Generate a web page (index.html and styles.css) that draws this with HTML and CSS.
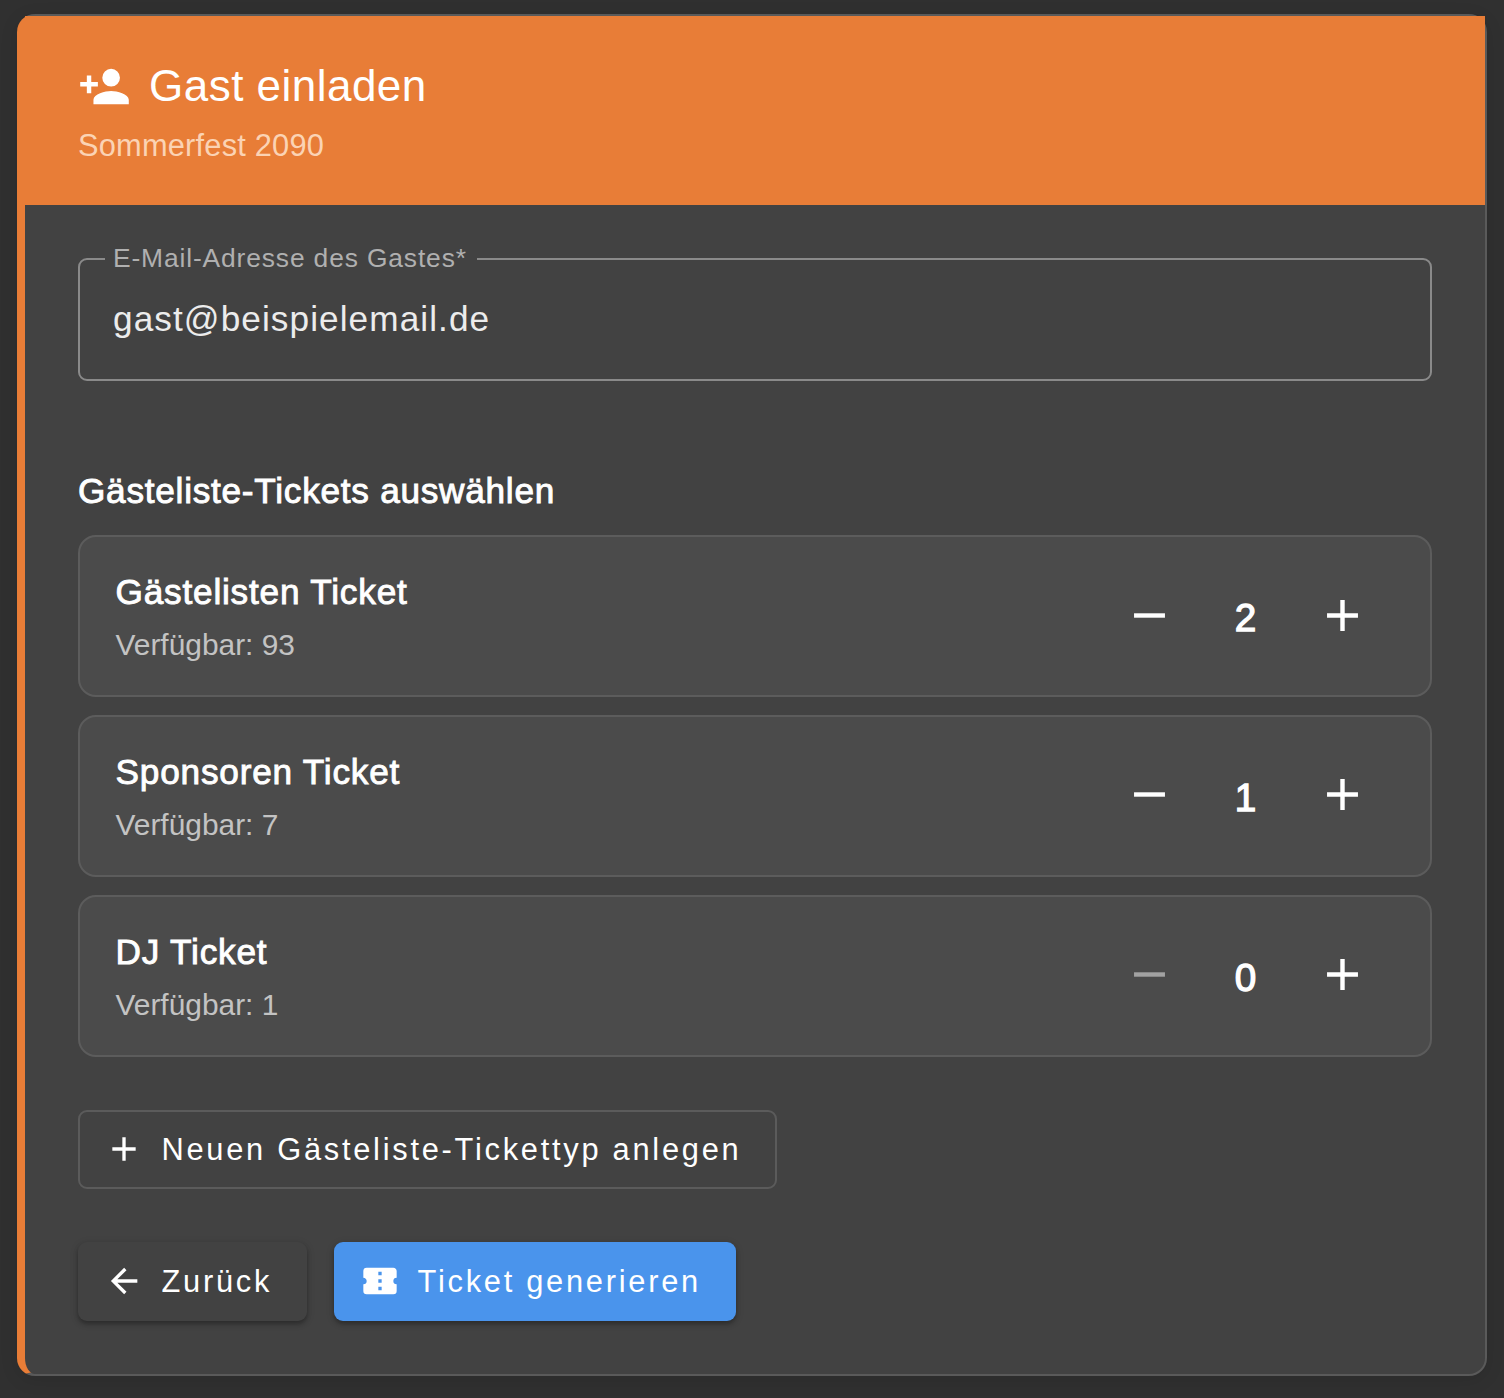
FILE: index.html
```html
<!DOCTYPE html>
<html lang="de">
<head>
<meta charset="utf-8">
<title>Gast einladen</title>
<link rel="stylesheet" href="styles.css">
</head>
<body>
<main class="card">
  <header class="card-header">
    <h1 class="card-title">
      <svg class="icon-lg" viewBox="0 0 24 24"><path d="M15,14C12.33,14 7,15.33 7,18V20H23V18C23,15.33 17.67,14 15,14M6,10V7H4V10H1V12H4V15H6V12H9V10M15,12A4,4 0 0,0 19,8A4,4 0 0,0 15,4A4,4 0 0,0 11,8A4,4 0 0,0 15,12Z"/></svg>
      <span>Gast einladen</span>
    </h1>
    <p class="card-subtitle">Sommerfest 2090</p>
  </header>
  <div class="card-body">
    <div class="field">
      <span class="field-label">E-Mail-Adresse des Gastes*</span>
      <span class="field-value">gast@beispielemail.de</span>
    </div>
    <h2 class="section-title">Gästeliste-Tickets auswählen</h2>
    <div class="tickets">
      <div class="ticket">
        <div class="ticket-info"><div class="ticket-name">Gästelisten Ticket</div><div class="ticket-stock">Verfügbar: 93</div></div>
        <div class="stepper">
          <svg class="step" viewBox="0 0 24 24"><path d="M19,13H5V11H19V13Z"/></svg>
          <span class="count">2</span>
          <svg class="step" viewBox="0 0 24 24"><path d="M19,13H13V19H11V13H5V11H11V5H13V11H19V13Z"/></svg>
        </div>
      </div>
      <div class="ticket">
        <div class="ticket-info"><div class="ticket-name">Sponsoren Ticket</div><div class="ticket-stock">Verfügbar: 7</div></div>
        <div class="stepper">
          <svg class="step" viewBox="0 0 24 24"><path d="M19,13H5V11H19V13Z"/></svg>
          <span class="count">1</span>
          <svg class="step" viewBox="0 0 24 24"><path d="M19,13H13V19H11V13H5V11H11V5H13V11H19V13Z"/></svg>
        </div>
      </div>
      <div class="ticket">
        <div class="ticket-info"><div class="ticket-name">DJ Ticket</div><div class="ticket-stock">Verfügbar: 1</div></div>
        <div class="stepper">
          <svg class="step step-disabled" viewBox="0 0 24 24"><path d="M19,13H5V11H19V13Z"/></svg>
          <span class="count">0</span>
          <svg class="step" viewBox="0 0 24 24"><path d="M19,13H13V19H11V13H5V11H11V5H13V11H19V13Z"/></svg>
        </div>
      </div>
    </div>
    <button class="btn btn-outlined"><svg class="icon" viewBox="0 0 24 24"><path d="M19,13H13V19H11V13H5V11H11V5H13V11H19V13Z"/></svg><span>Neuen Gästeliste-Tickettyp anlegen</span></button>
    <div class="actions">
      <button class="btn btn-back"><svg class="icon" viewBox="0 0 24 24"><path d="M20,11V13H8L13.5,18.5L12.08,19.92L4.16,12L12.08,4.08L13.5,5.5L8,11H20Z"/></svg><span>Zurück</span></button>
      <button class="btn btn-primary"><svg class="icon" viewBox="0 0 24 24"><path d="M13,8.5H11V6.5H13V8.5M13,13H11V11H13V13M13,17.5H11V15.5H13V17.5M22,10V6C22,4.89 21.1,4 20,4H4A2,2 0 0,0 2,6V10C3.11,10 4,10.9 4,12A2,2 0 0,1 2,14V18A2,2 0 0,0 4,20H20A2,2 0 0,0 22,18V14A2,2 0 0,1 20,12A2,2 0 0,1 22,10Z"/></svg><span>Ticket generieren</span></button>
    </div>
  </div>
</main>
</body>
</html>
```
FILE: styles.css
```css
* { box-sizing: border-box; }
body {
  margin: 0;
  padding: 14px 17px 22px;
  background: #303030;
  color: #fff;
  font-family: "Liberation Sans", Arial, sans-serif;
}
svg { display: block; fill: currentColor; flex: none; }
h1, h2, p { margin: 0; font-weight: 400; }

.card {
  height: 1362px;
  border: 2px solid #5a5a5a;
  border-left: 8px solid #e87d37;
  border-radius: 18px;
  background: #424242;
  box-shadow: 0 4px 18px rgba(0, 0, 0, .1);
}
.card-header {
  height: 189px;
  padding: 43px 53px 0;
  background: #e87d37;
}
.card-title {
  display: flex;
  align-items: center;
  gap: 18px;
  height: 54px;
  font-size: 44px;
  letter-spacing: .48px;
}
.icon-lg { width: 53px; height: 53px; }
.card-subtitle {
  margin-top: 13px;
  font-size: 30.8px;
  line-height: 40px;
  letter-spacing: .2px;
  color: #fbd3b4;
}
.card-body { padding: 53px; }
.card-header + .card-body { padding-top: 53px; }

.field {
  position: relative;
  display: flex;
  align-items: center;
  height: 123px;
  padding: 0 0 2px 33px;
  border: 2px solid #8a8a8a;
  border-radius: 9px;
}
.field-label {
  position: absolute;
  top: -18px;
  left: 25px;
  width: 372px;
  padding-left: 8px;
  background: #424242;
  color: #b0b0b0;
  font-size: 26.4px;
  line-height: 32px;
  letter-spacing: .86px;
  white-space: nowrap;
}
.field-value {
  color: #ececec;
  font-size: 35.2px;
  line-height: 44px;
  letter-spacing: 1.08px;
}

.section-title {
  margin: 88px 0 22px;
  font-size: 35.2px;
  line-height: 44px;
  letter-spacing: .74px;
  -webkit-text-stroke: .9px currentColor;
}
.tickets { display: flex; flex-direction: column; gap: 18px; }
.ticket {
  display: flex;
  justify-content: space-between;
  height: 162px;
  padding: 28px 61.5px 0 35.5px;
  border: 2px solid #5c5c5c;
  border-radius: 18px;
  background: #4b4b4b;
}
.ticket-name {
  font-size: 35.2px;
  line-height: 53px;
  letter-spacing: .8px;
  -webkit-text-stroke: .9px currentColor;
}
.ticket-stock {
  color: #c3c3c3;
  font-size: 29.9px;
  line-height: 53px;
}
.stepper { display: flex; height: 102px; align-items: center; }
.step { width: 53px; height: 53px; margin-bottom: 1px; }
.ticket + .ticket .step { margin-bottom: 3px; }
.step-disabled { color: #a2a2a2; }
.count {
  width: 140px;
  padding-top: 3px;
  text-align: center;
  font-size: 38.7px;
  line-height: 44px;
  -webkit-text-stroke: 1.3px currentColor;
}

.btn {
  display: flex;
  align-items: center;
  height: 79px;
  padding: 0 0 0 26px;
  border: 0;
  border-radius: 9px;
  color: #fff;
  background: #424242;
  font-family: inherit;
  font-size: 30.8px;
  letter-spacing: 2.74px;
  white-space: nowrap;
}
.icon { width: 40px; height: 40px; margin: 0 17.5px 1px 0; }
.btn-outlined {
  width: 699px;
  margin-top: 53px;
  padding-left: 24px;
  border: 2px solid #5b5b5b;
}
.actions { display: flex; gap: 27px; margin-top: 53px; }
.btn-back, .btn-primary {
  box-shadow: 0 3px 4px rgba(0, 0, 0, .25), 0 2px 9px rgba(0, 0, 0, .14);
}
.btn-back { width: 229px; }
.btn-primary { width: 402px; background: #4a94ec; }
```
